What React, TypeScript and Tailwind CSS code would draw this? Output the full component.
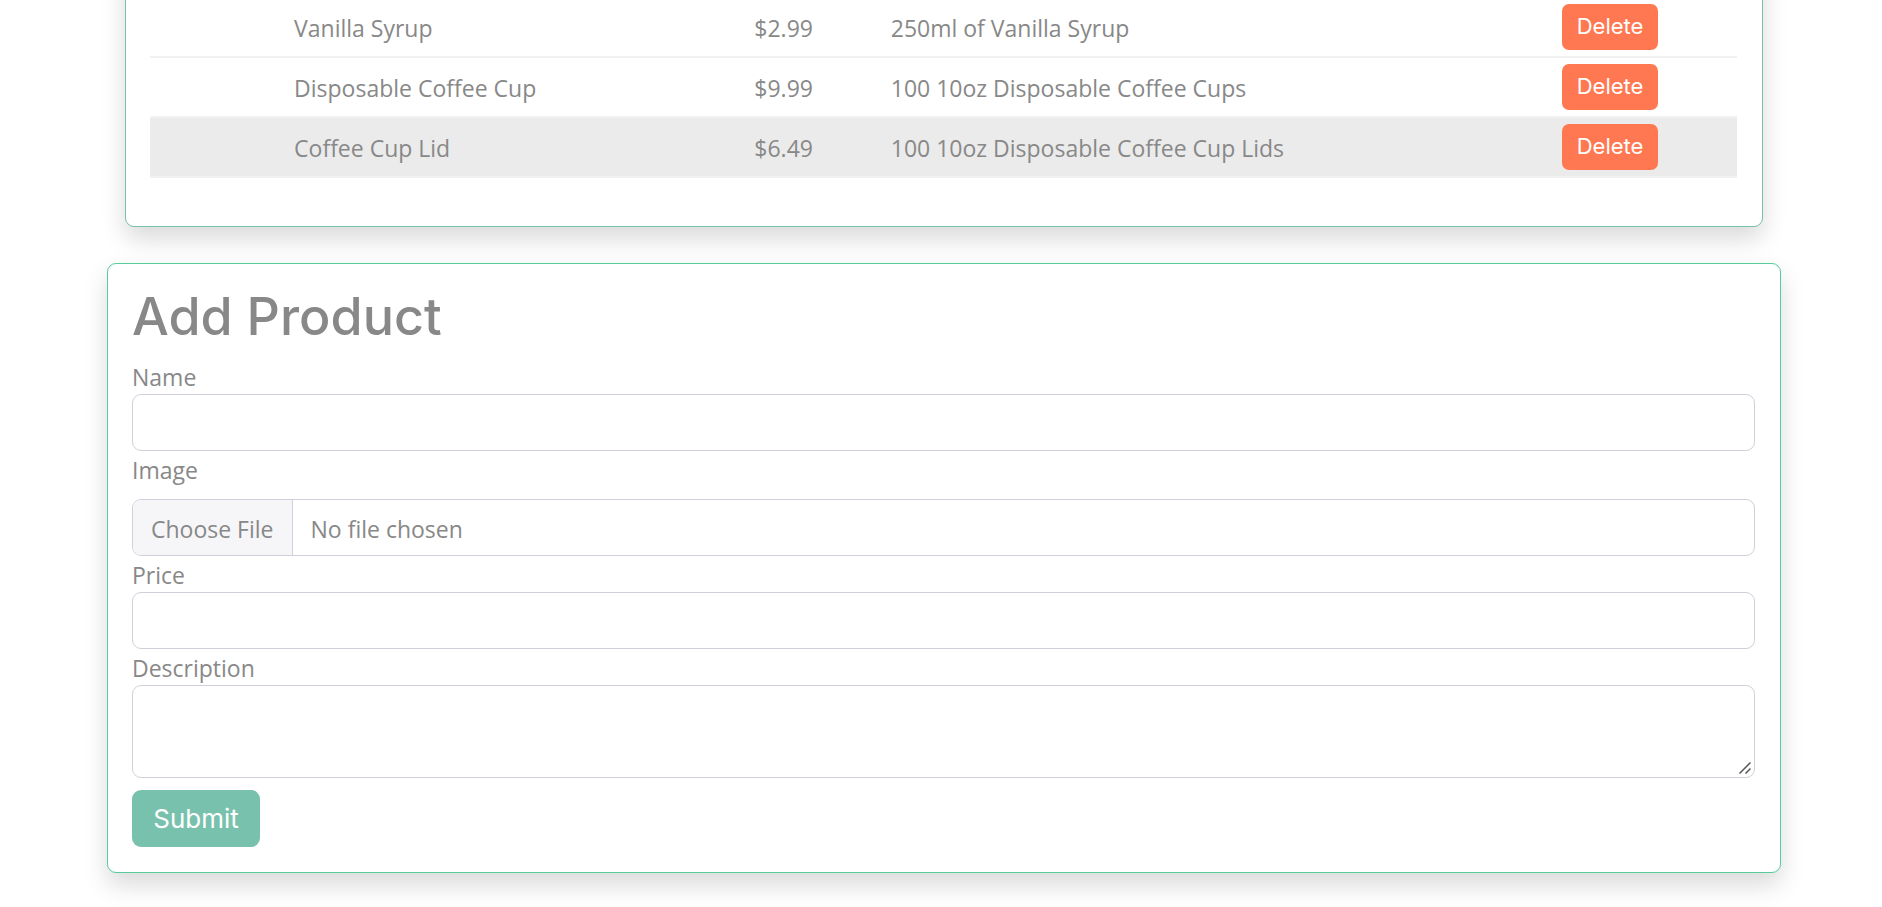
import React from "react";

type Product = { name: string; price: string; description: string };

const products: Product[] = [
  { name: "Vanilla Syrup", price: "$2.99", description: "250ml of Vanilla Syrup" },
  { name: "Disposable Coffee Cup", price: "$9.99", description: "100 10oz Disposable Coffee Cups" },
  { name: "Coffee Cup Lid", price: "$6.49", description: "100 10oz Disposable Coffee Cup Lids" },
];

const cell = "px-1.5 pt-0.5";
const label = "block h-9 leading-[38px]";
const field = "block w-full rounded-[9px] border border-[#ced1da] bg-white text-[#888888] outline-none";
const card = "rounded-[9px] border bg-white pl-6 pr-[25px] shadow-[0_12px_24px_rgba(0,0,0,0.15)]";

function ProductTable() {
  return (
    <section className={`${card} mx-[18px] -mt-[68px] border-[#78c2ad] pb-12 pt-16`}>
      <table className="w-full table-fixed border-collapse" aria-label="Products">
        <colgroup>
          <col className="w-[8.7%]" />
          <col className="w-[29%]" />
          <col className="w-[8.6%]" />
          <col className="w-[42.3%]" />
          <col />
        </colgroup>
        <tbody>
          {products.map((p) => (
            <tr key={p.name} className="h-[60px] border-b-2 border-[#f2f2f2] last:bg-[#ebebeb]">
              <td />
              <td className={cell}>{p.name}</td>
              <td className={cell}>{p.price}</td>
              <td className={cell}>{p.description}</td>
              <td className="px-1.5">
                <button
                  type="button"
                  className="block h-[46px] w-24 rounded-[7px] bg-[#ff7851] pb-0.5 font-['Inter',sans-serif] text-[22px] text-white"
                >
                  Delete
                </button>
              </td>
            </tr>
          ))}
        </tbody>
      </table>
    </section>
  );
}

function AddProduct() {
  return (
    <section className={`${card} mt-9 border-[#56cc9d] pb-[25px] pt-6`}>
      <h1 className="mb-3 font-['Inter',sans-serif] text-[52px] font-medium leading-[58px]">Add Product</h1>
      <form onSubmit={(e) => e.preventDefault()}>
        <label htmlFor="name" className={label}>Name</label>
        <input id="name" type="text" className={`${field} h-[57px] px-[18px]`} />
        <label htmlFor="image" className={`${label} mb-3`}>Image</label>
        <input
          id="image"
          type="file"
          className={`${field} h-[57px] overflow-hidden file:mr-[18px] file:h-[55px] file:border-r file:border-solid file:border-[#ced1da] file:bg-[#f6f6f9] file:px-[18px] file:pt-0.5 file:text-[#888888]`}
        />
        <label htmlFor="price" className={label}>Price</label>
        <input id="price" type="text" className={`${field} h-[57px] px-[18px]`} />
        <label htmlFor="description" className={label}>Description</label>
        <div className="relative">
          <textarea
            id="description"
            className={`${field} h-[93px] resize-y px-[18px] py-2 [&::-webkit-resizer]:bg-transparent`}
          />
          <svg
            className="pointer-events-none absolute bottom-1 right-1 h-3 w-3"
            viewBox="0 0 12 12"
            fill="none"
            stroke="#555555"
            strokeWidth="1.5"
            aria-hidden="true"
          >
            <path d="M0.5 11.5 11.5 0.5M6.5 11.5 11.5 6.5" />
          </svg>
        </div>
        <button
          type="submit"
          className="mt-3 block h-[57px] w-32 rounded-[9px] bg-[#78c2ad] font-['Inter',sans-serif] text-[26px] text-white"
        >
          Submit
        </button>
      </form>
    </section>
  );
}

export default function App() {
  return (
    <main className="flow-root overflow-hidden bg-white pb-9 pl-[107px] pr-[101px] font-['Open_Sans',sans-serif] text-[23px] leading-9 text-[#888888]">
      <ProductTable />
      <AddProduct />
    </main>
  );
}
